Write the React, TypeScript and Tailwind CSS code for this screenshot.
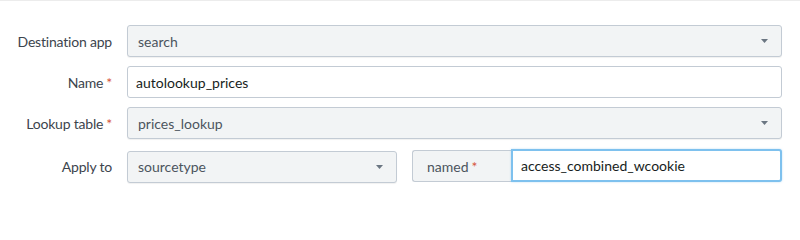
const Caret = () => (
  <svg width="7" height="4" viewBox="0 0 7 4" className="shrink-0">
    <path d="M0 0h7L3.5 4z" fill="#6b7682" />
  </svg>
);

const Req = () => <span className="ml-[3px] text-[#d6563c]">*</span>;

const Label = ({ text, required }: { text: string; required?: boolean }) => (
  <div className="w-[112px] shrink-0 text-right text-[14px] tracking-[-0.2px] text-[#3c444d]">
    {text}
    {required && <Req />}
  </div>
);

const Select = ({ value, className = '' }: { value: string; className?: string }) => (
  <div
    className={`flex h-[32px] items-center justify-between rounded-[3px] border border-[#c3cbd4] bg-[#f2f4f5] pl-[10px] pr-[13px] text-[14px] text-[#4c555e] shadow-[0_1px_1px_rgba(0,0,0,0.06)] ${className}`}
  >
    <span>{value}</span>
    <Caret />
  </div>
);

export default function App() {
  return (
    <div className="h-[200px] w-[800px] border-t border-[#ececec] bg-white font-['Lato','Liberation_Sans',sans-serif]">
      <div className="flex flex-col pt-[24px] pr-[18px]">
        <div className="flex items-center gap-[15px]">
          <Label text="Destination app" />
          <Select value="search" className="flex-1" />
        </div>
        <div className="mt-[9px] flex items-center gap-[15px]">
          <Label text="Name" required />
          <div className="flex h-[32px] flex-1 items-center rounded-[3px] border border-[#c3cbd4] bg-white pl-[8px] text-[14px] text-[#171d21]">
            autolookup_prices
          </div>
        </div>
        <div className="mt-[9px] flex items-center gap-[15px]">
          <Label text="Lookup table" required />
          <Select value="prices_lookup" className="flex-1" />
        </div>
        <div className="mt-[11px] flex items-center gap-[15px]">
          <Label text="Apply to" />
          <Select value="sourcetype" className="w-[270px]" />
          <div className="flex flex-1">
            <div className="flex h-[32px] w-[99px] items-center rounded-l-[3px] border border-r-0 border-[#c3cbd4] bg-[#f2f4f5] pl-[14px] text-[14px] text-[#4c555e]">
              named
              <Req />
            </div>
            <div className="flex h-[33px] flex-1 -translate-y-[1px] items-center rounded-r-[3px] border-2 border-[#7ec1ee] bg-white pl-[8px] text-[14px] text-[#171d21] shadow-[0_0_2px_rgba(126,193,238,0.6)]">
              access_combined_wcookie
            </div>
          </div>
        </div>
      </div>
    </div>
  );
}
